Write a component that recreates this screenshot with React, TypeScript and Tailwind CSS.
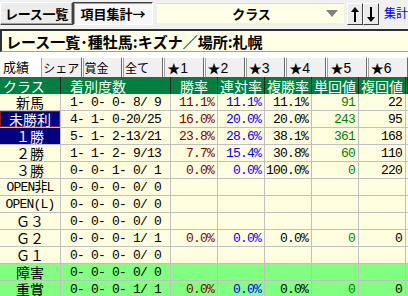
import React from "react";

type Row = {
  c: string;
  d: string;
  w?: string;
  r?: string;
  f?: string;
  t?: string;
  p?: string;
  green?: boolean;
  kind?: "focus" | "sel";
};

const rows: Row[] = [
  { c: "新馬", d: "1- 0- 0- 8/ 9", w: "11.1%", r: "11.1%", f: "11.1%", t: "91", p: "22" },
  { c: "未勝利", d: "4- 1- 0-20/25", w: "16.0%", r: "20.0%", f: "20.0%", t: "243", p: "95", kind: "focus" },
  { c: "１勝", d: "5- 1- 2-13/21", w: "23.8%", r: "28.6%", f: "38.1%", t: "361", p: "168", kind: "sel" },
  { c: "２勝", d: "1- 1- 2- 9/13", w: "7.7%", r: "15.4%", f: "30.8%", t: "60", p: "110" },
  { c: "３勝", d: "0- 0- 1- 0/ 1", w: "0.0%", r: "0.0%", f: "100.0%", t: "0", p: "220" },
  { c: "OPEN非L", d: "0- 0- 0- 0/ 0" },
  { c: "OPEN(L)", d: "0- 0- 0- 0/ 0" },
  { c: "Ｇ３", d: "0- 0- 0- 0/ 0" },
  { c: "Ｇ２", d: "0- 0- 0- 1/ 1", w: "0.0%", r: "0.0%", f: "0.0%", t: "0", p: "0" },
  { c: "Ｇ１", d: "0- 0- 0- 0/ 0" },
  { c: "障害", d: "0- 0- 0- 0/ 0", green: true },
  { c: "重賞", d: "0- 0- 0- 1/ 1", w: "0.0%", r: "0.0%", f: "0.0%", t: "0", p: "0", green: true },
];

const tabs = ["成績", "シェア", "賞金", "全て", "★1", "★2", "★3", "★4", "★5", "★6"];
const tabW = [41, 42, 41, 42, 41, 42, 41, 42, 41, 42];

const headers = [
  { t: "クラス", pl: "pl-[3px]" },
  { t: "着別度数", pl: "pl-[9px]" },
  { t: "勝率", pl: "pl-[9px]" },
  { t: "連対率", pl: "pl-[2px]" },
  { t: "複勝率", pl: "pl-[2px]" },
  { t: "単回値", pl: "pl-[2px]" },
  { t: "複回値", pl: "pl-[2px]" },
  { t: "", pl: "" },
];

const jp = "font-['Noto_Sans_CJK_JP','Noto_Sans',sans-serif]";
const mono = "font-['Liberation_Mono','DejaVu_Sans_Mono',monospace] text-[13px] tracking-[-0.8px]";
const monoJp = "font-['Liberation_Mono','Noto_Sans_CJK_JP',monospace] text-[13px] tracking-[-0.8px]";

function NumCell({ v, color }: { v?: string; color: string }) {
  return (
    <div className={`h-[17px] border-r border-b border-[#c0c0c0] flex items-center justify-end pr-[3px] ${mono} ${color} leading-none whitespace-pre`}>
      {v ?? ""}
    </div>
  );
}

export default function App() {
  return (
    <div className={`w-[408px] h-[296px] overflow-hidden bg-[#f0f0f0] ${jp} text-black`}>
      {/* top bar */}
      <div className="flex items-start h-[27px] pt-[2px]">
        <div className="w-[73px] h-[23px] bg-[#ececec] border border-t-white border-l-white border-r-[#404040] border-b-[#404040] shadow-[inset_-1px_-1px_#a0a0a0] flex items-center justify-center text-[13px] font-bold leading-none whitespace-nowrap tracking-[-0.3px]">
          レース一覧
        </div>
        <div className="w-[80px] h-[23px] bg-[#f7f7f7] border border-t-[#404040] border-l-[#404040] border-r-white border-b-white shadow-[inset_1px_1px_#a0a0a0] flex items-center justify-center text-[13px] font-bold leading-none whitespace-nowrap">
          項目集計→
        </div>
        <div className="ml-[4px] mt-[1px] w-[187px] h-[20px] bg-[#ffffe6] border-t border-[#d8d8d8] relative flex items-center justify-center">
          <span className="text-[13px] font-bold leading-none pl-[2px]">クラス</span>
          <svg className="absolute left-[169px] top-[6px]" width="12" height="8" viewBox="0 0 12 8">
            <polygon points="0,0 12,0 6,7" fill="#808080" />
          </svg>
        </div>
        <div className="ml-[3px] w-[16px] h-[22px] mt-[1px] bg-[#ececec] border border-t-white border-l-white border-r-[#404040] border-b-[#404040] flex items-center justify-center">
          <svg width="8" height="15" viewBox="0 0 8 15">
            <polygon points="4,0 8,5 5,5 5,15 3,15 3,5 0,5" fill="#000" />
          </svg>
        </div>
        <div className="w-[16px] h-[22px] mt-[1px] bg-[#ececec] border border-t-white border-l-white border-r-[#404040] border-b-[#404040] flex items-center justify-center">
          <svg width="8" height="15" viewBox="0 0 8 15">
            <polygon points="4,15 8,10 5,10 5,0 3,0 3,10 0,10" fill="#000" />
          </svg>
        </div>
        <div className="ml-[5px] mt-[4px] text-[12px] leading-[14px] text-[#0000ff] whitespace-nowrap">集計</div>
      </div>

      {/* title */}
      <div className="mt-[2px] h-[23px] bg-[#ffffe6] border-t-2 border-l-2 border-t-[#303030] border-l-[#303030] border-b border-b-[#a0a0a0] flex items-center pl-[4px]">
        <span className="text-[15px] font-bold leading-none whitespace-nowrap">レース一覧･種牡馬:キズナ／場所:札幌</span>
      </div>

      {/* tabs */}
      <div className="h-[25px] bg-white flex items-end pt-[3px]">
        {tabs.map((t, i) => {
          const sel = i === 0;
          return (
            <div
              key={t}
              style={{ width: tabW[i] }}
              className={
                sel
                  ? "h-[22px] bg-white flex items-center pl-[3px] text-[13px] leading-none whitespace-nowrap"
                  : "h-[20px] bg-[#f0f0f0] border-l border-t border-l-white border-t-white border-r border-r-[#696969] shadow-[inset_1px_0_#a0a0a0] flex items-center pl-[2px] text-[12px] leading-none whitespace-nowrap"
              }
            >
              {t.startsWith("★") ? (
                <span className="flex items-center pl-[1px]">
                  <span className="text-[13px]">★</span>
                  <span className="font-['Liberation_Sans',sans-serif] text-[14px]">{t.slice(1)}</span>
                </span>
              ) : (
                t
              )}
            </div>
          );
        })}
      </div>

      {/* table */}
      <div className="grid grid-cols-[61px_110px_47px_47px_47px_47px_47px_1fr] bg-[#ffffe0]">
        {headers.map((h, i) => (
          <div
            key={i}
            className={`h-[17px] bg-[#008040] border-r border-[#202020] text-white text-[14px] leading-none flex items-center whitespace-nowrap ${h.pl}`}
          >
            {h.t}
          </div>
        ))}
        {rows.map((r, i) => {
          const bg = r.green ? "bg-[#80ff80]" : "bg-[#ffffe0]";
          const font = r.c.startsWith("OPEN") ? monoJp : "text-[14px]";
          const base = `h-[17px] border-r border-b border-[#c0c0c0] flex items-center justify-center leading-none whitespace-nowrap ${font}`;
          let cls = `${base} ${bg}`;
          if (r.kind === "focus") cls = `${base} bg-[#000080] text-white shadow-[inset_0_0_0_1px_#8b1a1a]`;
          if (r.kind === "sel") cls = `${base} bg-[#000080] text-white`;
          return (
            <React.Fragment key={i}>
              <div className={cls}>{r.c}</div>
              <div className={`h-[17px] border-r border-b border-[#c0c0c0] flex items-center justify-center ${mono} leading-none whitespace-pre ${bg}`}>
                {r.d}
              </div>
              <div className={bg}><NumCell v={r.w} color="text-[#800000]" /></div>
              <div className={bg}><NumCell v={r.r} color="text-[#0000ff]" /></div>
              <div className={bg}><NumCell v={r.f} color="text-black" /></div>
              <div className={bg}><NumCell v={r.t} color="text-[#008000]" /></div>
              <div className={bg}><NumCell v={r.p} color="text-black" /></div>
              <div className={`h-[17px] border-b border-[#c0c0c0] ${bg}`} />
            </React.Fragment>
          );
        })}
      </div>
    </div>
  );
}
